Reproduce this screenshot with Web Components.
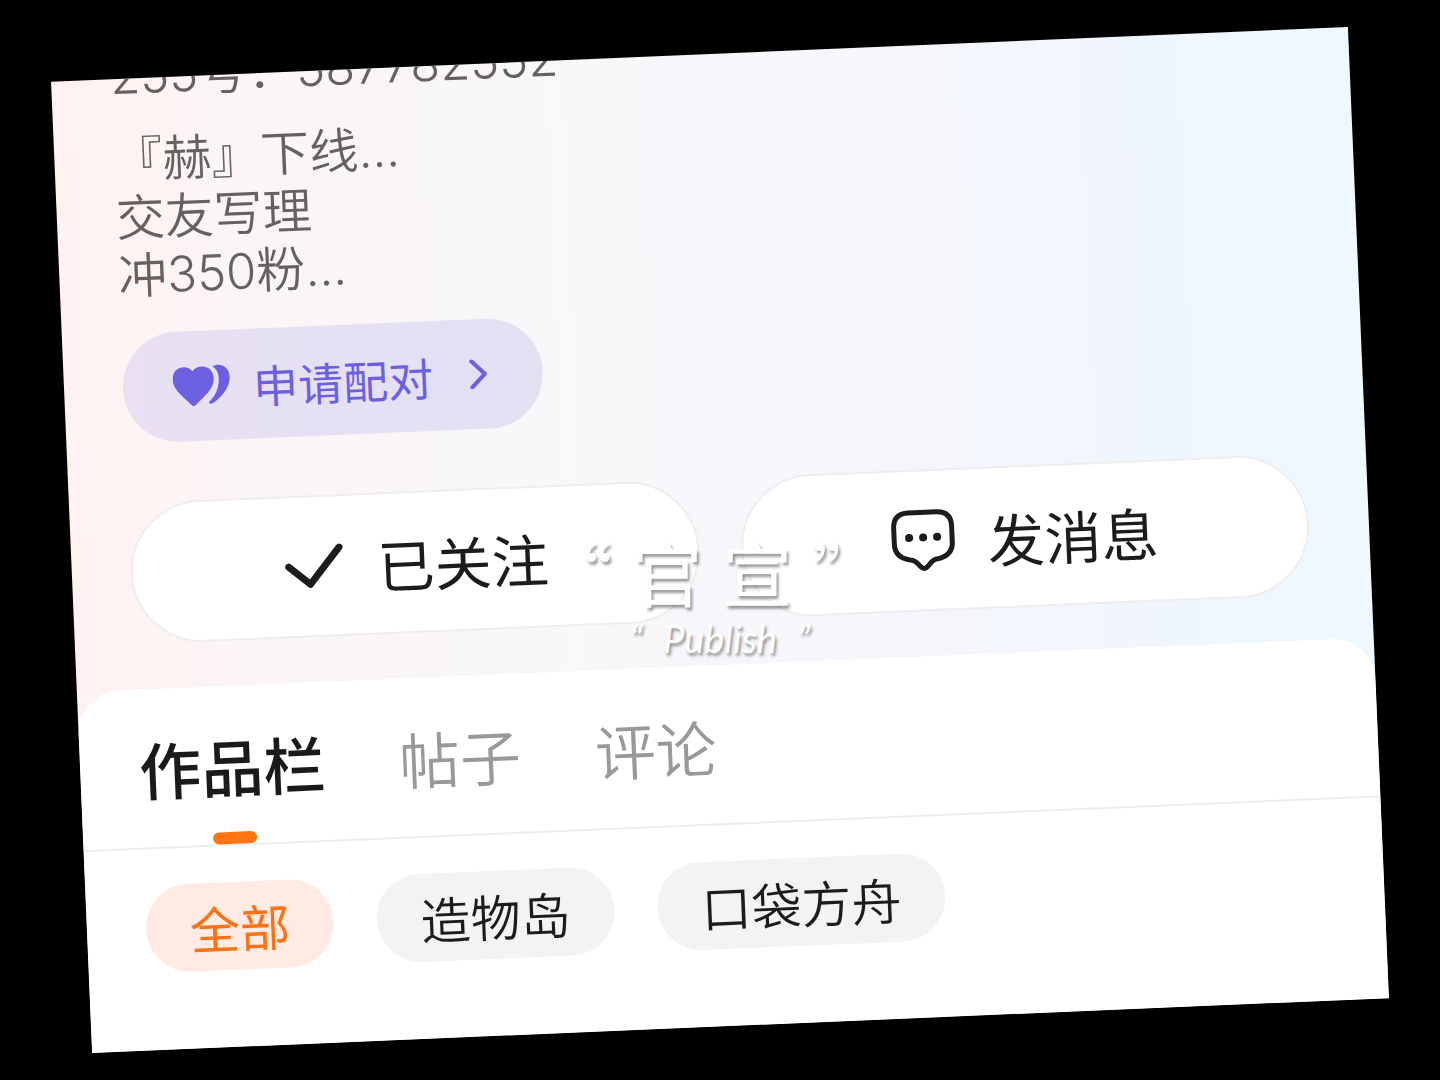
<!DOCTYPE html>
<html lang="zh-CN">
<head>
    <meta charset="UTF-8">
    <meta name="viewport" content="width=device-width, initial-scale=1.0">
    <title>个人主页</title>
    <style>
        body {
            margin: 0;
            background: #000;
            font-family: Inter, "Noto Sans CJK SC", sans-serif;
        }
    </style>
</head>
<body>
    <profile-page>
        <profile-card>
            <profile-bio slot="top"></profile-bio>
            <match-button slot="top">申请配对</match-button>
            <action-bar slot="top">
                <action-button icon="check">已关注</action-button>
                <action-button icon="chat">发消息</action-button>
            </action-bar>
            <works-panel slot="sheet"></works-panel>
        </profile-card>
        <title-overlay slot="overlay"></title-overlay>
    </profile-page>

    <script>
        class ProfilePage extends HTMLElement {
            constructor() {
                super();
                this.attachShadow({ mode: 'open' });
                this.shadowRoot.innerHTML = `
        <style>
            :host {
                display: grid;
                place-items: center;
                position: relative;
                min-height: 100vh;
                overflow: hidden;
            }
        </style>
        <slot></slot>
        <slot name="overlay"></slot>
      `;
            }
        }
        customElements.define('profile-page', ProfilePage);

        class ProfileCard extends HTMLElement {
            constructor() {
                super();
                this.attachShadow({ mode: 'open' });
                this.shadowRoot.innerHTML = `
        <style>
            :host {
                display: block;
                box-sizing: border-box;
                width: calc(100% - 142px);
                overflow: hidden;
                transform: rotate(-2.42deg);
                background: linear-gradient(90deg, #fff2f0 0%, #fdf4f4 7%, #faf6f7 24%, #f7f7fa 44%, #f5f6fc 66%, #f0f6fe 84%, #eff8ff 100%);
            }
            .top {
                padding: 0 60px 45px 59px;
            }
        </style>
        <div class="top"><slot name="top"></slot></div>
        <slot name="sheet"></slot>
      `;
            }
        }
        customElements.define('profile-card', ProfileCard);

        class ProfileBio extends HTMLElement {
            constructor() {
                super();
                this.attachShadow({ mode: 'open' });
                this.shadowRoot.innerHTML = `
        <style>
            :host {
                display: block;
                /* the account line is scrolled half out of the card */
                margin-top: -31px;
                font-size: 49px;
                line-height: 58px;
                font-weight: 350;
                color: #666060;
            }
            p {
                margin: 0;
            }
            .account {
                margin-bottom: 26px;
            }
        </style>
        <p class="account">255号：587782552</p>
        <p>『赫』下线...</p>
        <p>交友写理</p>
        <p>冲350粉...</p>
      `;
            }
        }
        customElements.define('profile-bio', ProfileBio);

        class MatchButton extends HTMLElement {
            constructor() {
                super();
                this.attachShadow({ mode: 'open' });
                this.shadowRoot.innerHTML = `
        <style>
            :host {
                display: block;
                margin-top: 28px;
            }
            button {
                display: flex;
                align-items: center;
                height: 110px;
                padding: 0 55px 0 50px;
                border: 0;
                border-radius: 55px;
                background: linear-gradient(90deg, #e8e0f3, #e3e0f4);
                color: #6c5fe0;
                font: inherit;
                font-size: 45px;
            }
            .hearts {
                margin-right: 22px;
            }
            .arrow {
                margin-left: 36px;
            }
        </style>
        <button type="button">
            <svg class="hearts" width="58" height="42" viewBox="0 0 58 42" fill="currentColor" aria-hidden="true">
                <path d="M20 6C15-1 0 0 0 14c0 11 11 18 18 26q2 2 4 0C30 32 41 25 41 14 41 0 25-1 20 6Z"/>
                <path d="M40 2C48-2 57 3 57 13c0 11-9 20-18 26q-3 1-4-1C42 32 46 24 46 14 46 8 44 5 40 2Z"/>
            </svg>
            <slot></slot>
            <svg class="arrow" width="19" height="30" viewBox="0 0 19 30" fill="none" stroke="currentColor" stroke-width="4" stroke-linecap="round" stroke-linejoin="round" aria-hidden="true">
                <path d="M3 2 16 15 3 28"/>
            </svg>
        </button>
      `;
            }
        }
        customElements.define('match-button', MatchButton);

        class ActionBar extends HTMLElement {
            constructor() {
                super();
                this.attachShadow({ mode: 'open' });
                this.shadowRoot.innerHTML = `
        <style>
            :host {
                display: grid;
                grid-template-columns: 1fr 1fr;
                gap: 42px;
                margin-top: 59px;
            }
        </style>
        <slot></slot>
      `;
            }
        }
        customElements.define('action-bar', ActionBar);

        const icons = {
            check: `<path d="M7 32 28 50 58 14" stroke-width="7"/>`,
            chat: `<path d="M18 4H46Q61 4 61 19V35Q61 48 46 51C38 51 37 60 32 60S26 51 18 51Q3 48 3 35V19Q3 4 18 4Z" stroke-width="5"/>
                <path d="M18 29h.1M32 29h.1M46 29h.1" stroke-width="8"/>`
        };

        class ActionButton extends HTMLElement {
            constructor() {
                super();
                this.attachShadow({ mode: 'open' });
            }

            connectedCallback() {
                this.shadowRoot.innerHTML = `
        <style>
            :host {
                display: block;
            }
            button {
                display: flex;
                align-items: center;
                justify-content: center;
                gap: 32px;
                width: 100%;
                height: 142px;
                border: 2px solid #efedef;
                border-radius: 71px;
                background: #fff;
                color: #1c1c1c;
                font: inherit;
                font-size: 57px;
                font-weight: 400;
            }
        </style>
        <button type="button">
            <svg width="64" height="64" viewBox="0 0 64 64" fill="none" stroke="currentColor" stroke-linecap="round" stroke-linejoin="round" aria-hidden="true">${icons[this.getAttribute('icon')]}</svg>
            <slot></slot>
        </button>
      `;
            }
        }
        customElements.define('action-button', ActionButton);

        class WorksPanel extends HTMLElement {
            constructor() {
                super();
                this.attachShadow({ mode: 'open' });
                this.shadowRoot.innerHTML = `
        <style>
            :host {
                display: block;
                border-radius: 42px 42px 0 0;
                background: #fff;
            }
            button {
                border: 0;
                padding: 0;
                background: none;
                font: inherit;
            }
            .tabs {
                display: flex;
                align-items: center;
                gap: 74px;
                height: 158px;
                padding: 0 59px;
                border-bottom: 2px solid #ededed;
            }
            .tabs button {
                position: relative;
                height: 100%;
                font-size: 61px;
                font-weight: 350;
                color: #999;
            }
            .tabs button.active {
                font-size: 62px;
                font-weight: 500;
                color: #1a1a1a;
            }
            .active::after {
                content: "";
                position: absolute;
                left: 50%;
                bottom: 0;
                width: 44px;
                height: 12px;
                margin-left: -22px;
                border-radius: 6px;
                background: #ff7514;
            }
            .chips {
                display: flex;
                gap: 43px;
                padding: 36px 59px 77px;
            }
            .chips button {
                height: 88px;
                padding: 0 44px;
                border-radius: 44px;
                background: #f3f3f3;
                color: #1c1c1c;
                font-size: 50px;
                font-weight: 350;
            }
            .chips button.on {
                background: #ffebe4;
                color: #f97316;
                font-weight: 400;
            }
        </style>
        <div class="tabs" role="tablist">
            <button type="button" role="tab" class="active" aria-selected="true">作品栏</button>
            <button type="button" role="tab">帖子</button>
            <button type="button" role="tab">评论</button>
        </div>
        <div class="chips">
            <button type="button" class="on">全部</button>
            <button type="button">造物岛</button>
            <button type="button">口袋方舟</button>
        </div>
      `;
            }
        }
        customElements.define('works-panel', WorksPanel);

        class TitleOverlay extends HTMLElement {
            constructor() {
                super();
                this.attachShadow({ mode: 'open' });
                this.shadowRoot.innerHTML = `
        <style>
            :host {
                position: absolute;
                inset: 0;
                display: flex;
                flex-direction: column;
                align-items: center;
                justify-content: center;
                gap: 4px;
                padding: 112px 16px 0 0;
                pointer-events: none;
                color: #fff;
                text-shadow: 2px 3px 3px rgba(0, 0, 0, .4);
            }
            div {
                display: flex;
            }
            .main {
                gap: 20px;
                font-family: "Noto Sans CJK SC", sans-serif;
                font-size: 70px;
                line-height: 80px;
            }
            .sub {
                gap: 20px;
                padding-left: 16px;
                font-family: Lato, sans-serif;
                font-size: 38px;
                font-style: italic;
                line-height: 44px;
            }
        </style>
        <div class="main"><span>“</span><span>官</span><span>宣</span><span>”</span></div>
        <div class="sub"><span>“</span><span>Publish</span><span>”</span></div>
      `;
            }
        }
        customElements.define('title-overlay', TitleOverlay);
    </script>
</body>
</html>
